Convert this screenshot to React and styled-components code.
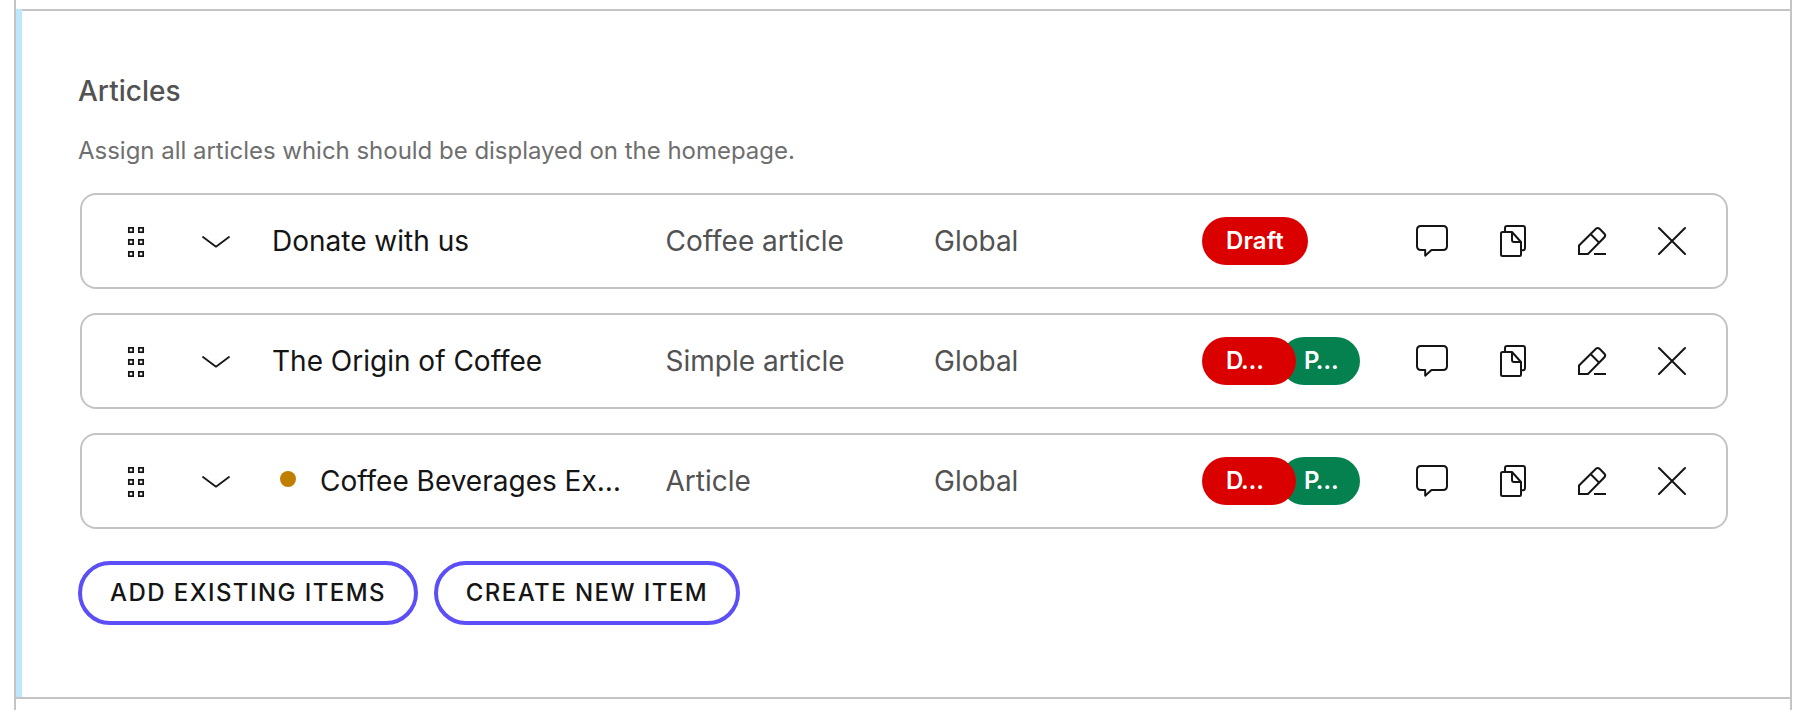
import React from "react";
import styled, { createGlobalStyle } from "styled-components";

const GlobalStyle = createGlobalStyle`
  * {
    box-sizing: border-box;
  }
  body {
    margin: 0;
    background-color: #fff;
    font-family: "Inter", sans-serif;
    color: #151515;
    overflow: hidden;
  }
`;

const Page = styled.div`
  display: flex;
  flex-direction: column;
  height: 710px;
  width: 1778px;
  margin-left: 14px;
  border-left: 2px solid #c4c4c4;
  border-right: 2px solid #c4c4c4;
  padding-top: 9px;
`;
const Section = styled.section`
  display: flex;
  height: 690px;
  border-bottom: 2px solid #c4c4c4;
`;
const Marker = styled.div`
  width: 6px;
  background-color: #bee6ff;
`;
const SectionBody = styled.div`
  flex: 1;
  border-top: 2px solid #c4c4c4;
  padding: 60px 62px 0 56px;
`;
const Title = styled.h2`
  margin: 0;
  font-size: 28px;
  line-height: 40px;
  font-weight: 550;
  color: #525252;
`;
const Description = styled.p`
  margin: 23px 0 0;
  font-size: 24px;
  line-height: 34px;
  letter-spacing: -0.02px;
  color: #6f6f6f;
`;
const List = styled.div`
  display: flex;
  flex-direction: column;
  gap: 24px;
  margin: 25px 0 32px 2px;
`;
const Row = styled.div`
  display: grid;
  grid-template-columns: 80px 80px 409px 268.5px 268.5px 190px repeat(4, 80px);
  align-items: center;
  height: 96px;
  padding-left: 14px;
  border: 2px solid #c4c4c4;
  border-radius: 16px;
`;
const IconCell = styled.div`
  display: flex;
  justify-content: center;
  align-items: center;
  svg {
    display: block;
    fill: none;
    stroke: #151515;
    stroke-width: ${props => (props.$thin ? 1.75 : 2)};
  }
`;
const Name = styled.div`
  display: flex;
  align-items: center;
  padding-left: 16px;
  font-size: 28px;
  line-height: 40px;
  white-space: nowrap;
`;
const Dot = styled.span`
  width: 16px;
  height: 16px;
  margin: 0 24px 4px 8px;
  border-radius: 50%;
  background-color: #c07f00;
`;
const Cell = styled.div`
  padding-left: 0.5px;
  font-size: 28px;
  line-height: 40px;
  color: #525252;
`;
const Statuses = styled.div`
  display: flex;
`;
const Status = styled.span`
  position: relative;
  z-index: ${props => (props.$published ? 0 : 1)};
  width: ${props => props.$width}px;
  height: 48px;
  margin-left: ${props => (props.$published ? "-16px" : "0")};
  padding: 0 24px;
  border-radius: 24px;
  background-color: ${props => (props.$published ? "#058150" : "#db0000")};
  color: #fff;
  font-size: 24px;
  line-height: 48px;
  font-weight: 600;
  letter-spacing: ${props => (props.$short ? "-1.4px" : "0.1px")};
  white-space: nowrap;
`;
const Buttons = styled.div`
  display: flex;
  gap: 16px;
`;
const Button = styled.button`
  width: ${props => props.$width}px;
  height: 64px;
  padding: 0 0 2px 0;
  border: 4px solid #5b4ff5;
  border-radius: 32px;
  background-color: transparent;
  color: #151515;
  font-family: "Inter", sans-serif;
  font-size: 24px;
  font-weight: 500;
  letter-spacing: 1.44px;
  text-transform: uppercase;
  cursor: pointer;
`;

const DragIcon = () => (
  <svg width="32" height="32" viewBox="0 0 32 32">
    {[2.85, 14.85, 26.85].map(y => (
      <React.Fragment key={y}>
        <rect x="8.85" y={y} width="4.3" height="4.3" />
        <rect x="18.85" y={y} width="4.3" height="4.3" />
      </React.Fragment>
    ))}
  </svg>
);
const ChevronIcon = () => (
  <svg width="32" height="32" viewBox="0 0 32 32" strokeLinecap="round" strokeLinejoin="round">
    <path d="M3 12L16 21.7L29 12" />
  </svg>
);
const CommentIcon = () => (
  <svg width="32" height="32" viewBox="0 0 32 32" strokeLinejoin="round">
    <path d="M5 1H27Q31 1 31 5V21Q31 25 27 25H15.5L9.2 30.700V25H5Q1 25 1 21V5Q1 1 5 1Z" />
  </svg>
);
const CopyIcon = () => (
  <svg width="32" height="32" viewBox="0 0 32 32" strokeLinejoin="round">
    <path d="M9 7V3Q9 1 11 1H27Q29 1 29 3V23Q29 25.3 27 25.3H25" />
    <path d="M16 7H6.5Q5 7 5 8.500V29.500Q5 31 6.500 31H23.500Q25 31 25 29.500V17L16 7V15Q16 17 18 17H25" />
  </svg>
);
const EditIcon = () => (
  <svg width="32" height="32" viewBox="0 0 32 32">
    <path d="M3 29V20.500L20.200 3.600Q21.700 2.300 23.300 3.600L28.400 8.700Q29.900 10.500 28.400 12.300L12 29Z" />
    <path d="M15 9.500L22.700 17.200M18 29H30" />
  </svg>
);
const CloseIcon = () => (
  <svg width="32" height="32" viewBox="0 0 32 32" strokeLinecap="round">
    <path d="M3 3L29 29M29 3L3 29" />
  </svg>
);

const articles = [
  { name: "Donate with us", type: "Coffee article" },
  { name: "The Origin of Coffee", type: "Simple article", published: true },
  { name: "Coffee Beverages Ex…", type: "Article", published: true, marked: true },
];

const App = () => {
  return (
    <Page>
      <GlobalStyle />
      <Section>
        <Marker />
        <SectionBody>
          <Title>Articles</Title>
          <Description>Assign all articles which should be displayed on the homepage.</Description>
          <List>
            {articles.map(article => (
              <Row key={article.name}>
                <IconCell $thin><DragIcon /></IconCell>
                <IconCell $thin><ChevronIcon /></IconCell>
                <Name>
                  {article.marked && <Dot />}
                  {article.name}
                </Name>
                <Cell>{article.type}</Cell>
                <Cell>Global</Cell>
                <Statuses>
                  {article.published ? (
                    <>
                      <Status $short $width={94}>D…</Status>
                      <Status $short $published $width={80}>P…</Status>
                    </>
                  ) : (
                    <Status $width={106}>Draft</Status>
                  )}
                </Statuses>
                <IconCell><CommentIcon /></IconCell>
                <IconCell><CopyIcon /></IconCell>
                <IconCell><EditIcon /></IconCell>
                <IconCell><CloseIcon /></IconCell>
              </Row>
            ))}
          </List>
          <Buttons>
            <Button $width={340}>Add existing items</Button>
            <Button $width={306}>Create new item</Button>
          </Buttons>
        </SectionBody>
      </Section>
    </Page>
  );
};

export default App;
